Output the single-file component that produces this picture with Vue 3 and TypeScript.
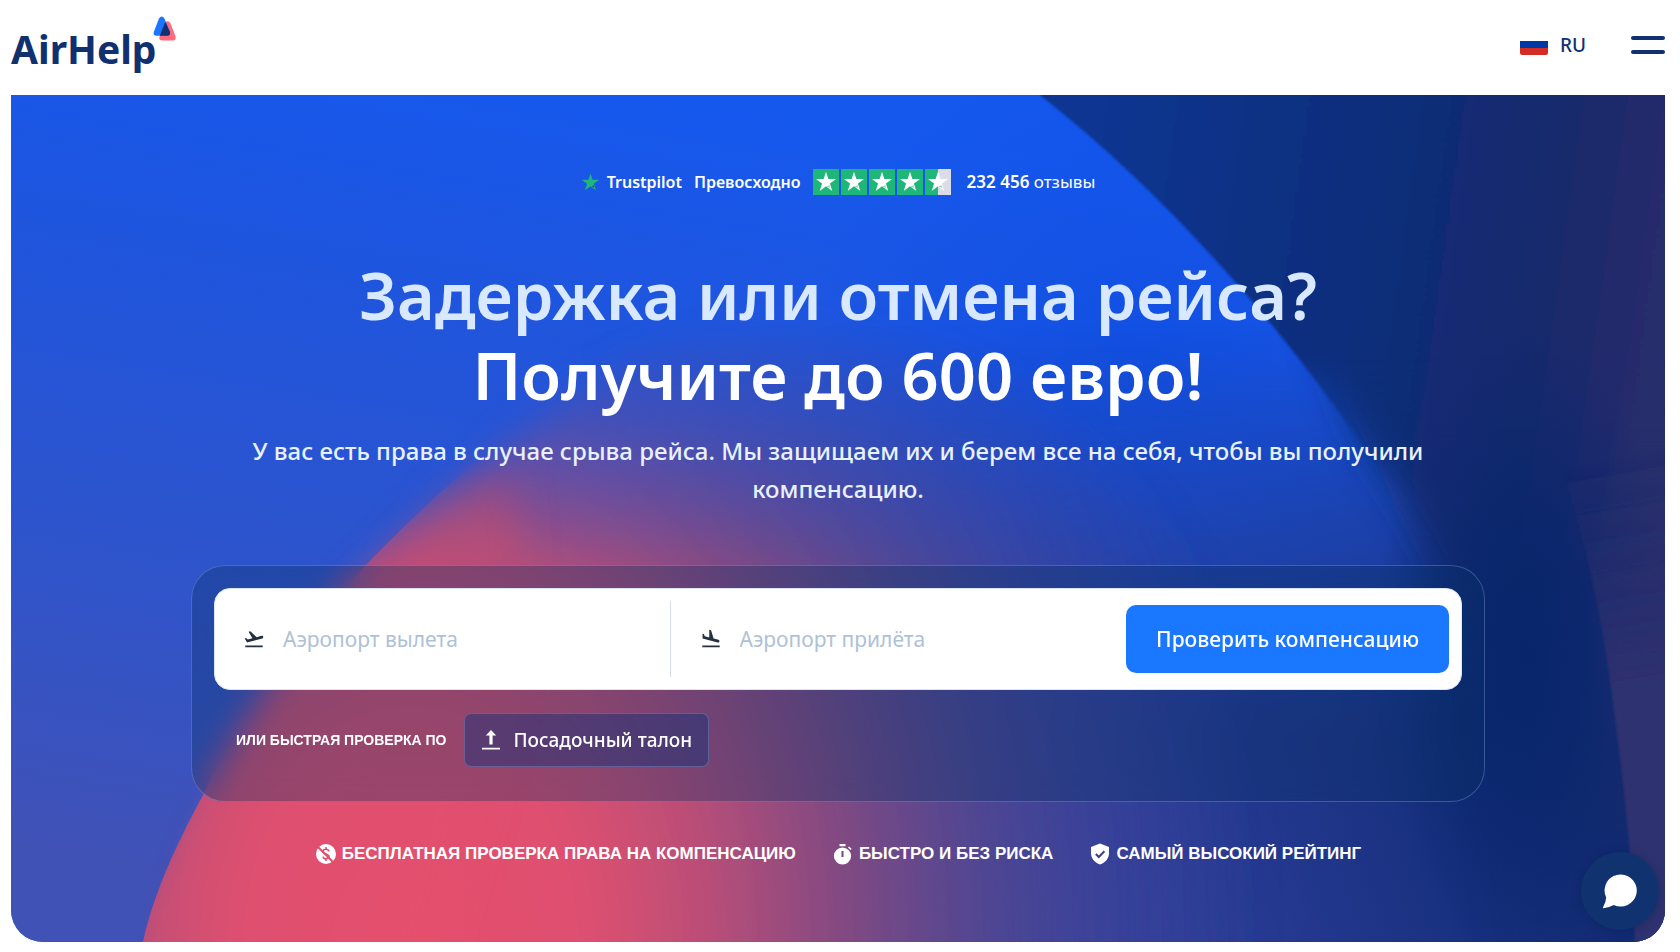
<script setup lang="ts">
import { ref } from 'vue'

const departure = ref('')
const arrival = ref('')

const starFills: ('full' | 'half')[] = ['full', 'full', 'full', 'full', 'half']
const starPoints = '12,2.5 14.2,9.2 21.3,9.2 15.6,13.4 17.8,20.2 12,16 6.2,20.2 8.4,13.4 2.7,9.2 9.8,9.2'
</script>

<template>
  <div class="page">
    <header class="header">
      <a class="logo" href="#" aria-label="AirHelp">
        <span class="logo-text">AirHelp</span>
        <svg class="logo-mark" viewBox="0 0 24 26" aria-hidden="true">
          <path d="M12.2 6.6Q14.8 3.6 17.2 6.8L22.6 20.6Q23.2 24.6 20 24.6H9.4Q5.6 24.4 6.4 21Z" fill="#ff6b7c" />
          <path d="M6 2.6Q8.8-1.4 11.4 2.6L17 16Q17.6 19.6 14.4 19.8H3.4Q0 19.6.8 16Z" fill="#1a75ff" />
          <path d="M12.6 6.2L17 16Q17.6 19.6 14.4 19.8H6.8L11.6 7.4Z" fill="#10306f" />
        </svg>
      </a>
      <nav class="header-actions">
        <button class="language" type="button">
          <svg class="flag" viewBox="0 0 28 20" aria-hidden="true">
            <clipPath id="flag-clip"><rect width="28" height="20" rx="2.5" /></clipPath>
            <g clip-path="url(#flag-clip)">
              <rect width="28" height="7" fill="#fff" />
              <rect y="6" width="28" height="7" fill="#0039a6" />
              <rect y="13" width="28" height="7" fill="#d52b25" />
            </g>
          </svg>
          <span>RU</span>
        </button>
        <button class="menu" type="button" aria-label="Меню"><i></i><i></i></button>
      </nav>
    </header>

    <main class="hero">
      <svg class="backdrop" viewBox="0 0 1654 847" preserveAspectRatio="none" aria-hidden="true">
        <defs>
          <linearGradient id="base" x1="700" y1="0" x2="560" y2="847" gradientUnits="userSpaceOnUse">
            <stop offset="0" stop-color="#1558ee" />
            <stop offset="0.3" stop-color="#2055dc" />
            <stop offset="0.65" stop-color="#2f54cb" />
            <stop offset="1" stop-color="#4152b6" />
          </linearGradient>
          <radialGradient id="bright" cx="1130" cy="270" r="330" gradientUnits="userSpaceOnUse">
            <stop offset="0" stop-color="#1150e4" />
            <stop offset="1" stop-color="#1150e4" stop-opacity="0" />
          </radialGradient>
          <linearGradient id="right-shade" x1="760" y1="800" x2="1520" y2="520" gradientUnits="userSpaceOnUse">
            <stop offset="0" stop-color="#40438f" stop-opacity="0" />
            <stop offset="0.3" stop-color="#36419a" stop-opacity="0.8" />
            <stop offset="0.65" stop-color="#20368a" />
            <stop offset="1" stop-color="#0f2a72" />
          </linearGradient>
          <linearGradient id="shade-fade" x1="0" y1="230" x2="0" y2="640" gradientUnits="userSpaceOnUse">
            <stop offset="0" stop-color="#000" />
            <stop offset="1" stop-color="#fff" />
          </linearGradient>
          <mask id="shade-mask" maskUnits="userSpaceOnUse" x="0" y="0" width="1654" height="847">
            <rect width="1654" height="847" fill="url(#shade-fade)" />
          </mask>

          <linearGradient id="navy" x1="1080" y1="100" x2="1654" y2="180" gradientUnits="userSpaceOnUse">
            <stop offset="0" stop-color="#0b3691" />
            <stop offset="0.45" stop-color="#0c2e7c" />
            <stop offset="0.8" stop-color="#182b6c" />
            <stop offset="1" stop-color="#282d6c" />
          </linearGradient>
          <linearGradient id="navy-sharp-fade" x1="0" y1="260" x2="0" y2="400" gradientUnits="userSpaceOnUse">
            <stop offset="0" stop-color="#fff" />
            <stop offset="1" stop-color="#000" />
          </linearGradient>
          <mask id="navy-sharp-mask" maskUnits="userSpaceOnUse" x="0" y="0" width="1654" height="847">
            <rect width="1654" height="847" fill="url(#navy-sharp-fade)" />
          </mask>
          <linearGradient id="navy-soft-fade" x1="0" y1="200" x2="0" y2="847" gradientUnits="userSpaceOnUse">
            <stop offset="0" stop-color="#fff" />
            <stop offset="0.45" stop-color="#fff" />
            <stop offset="0.85" stop-color="#333" />
            <stop offset="1" stop-color="#111" />
          </linearGradient>
          <mask id="navy-soft-mask" maskUnits="userSpaceOnUse" x="0" y="0" width="1654" height="847">
            <rect width="1654" height="847" fill="url(#navy-soft-fade)" />
          </mask>
          <radialGradient id="deep" cx="0" cy="0" r="1" gradientUnits="userSpaceOnUse" gradientTransform="translate(1515 560) scale(150 330)">
            <stop offset="0" stop-color="#08256b" />
            <stop offset="0.4" stop-color="#08266c" stop-opacity="0.8" />
            <stop offset="1" stop-color="#0a2870" stop-opacity="0" />
          </radialGradient>
          <linearGradient id="rim" x1="1500" y1="380" x2="1540" y2="600" gradientUnits="userSpaceOnUse">
            <stop offset="0" stop-color="#2b2d6c" stop-opacity="0" />
            <stop offset="1" stop-color="#2e306f" />
          </linearGradient>

          <radialGradient id="coral" cx="0" cy="0" r="1" gradientUnits="userSpaceOnUse" gradientTransform="translate(400 847) scale(850 1100)">
            <stop offset="0" stop-color="#e5506d" />
            <stop offset="0.2" stop-color="#df506f" />
            <stop offset="0.36" stop-color="#b74e78" />
            <stop offset="0.52" stop-color="#83497f" stop-opacity="0.94" />
            <stop offset="0.68" stop-color="#54468e" stop-opacity="0.8" />
            <stop offset="0.84" stop-color="#3e4296" stop-opacity="0.45" />
            <stop offset="1" stop-color="#34419a" stop-opacity="0" />
          </radialGradient>
          <linearGradient id="coral-soft-fade" x1="0" y1="190" x2="0" y2="847" gradientUnits="userSpaceOnUse">
            <stop offset="0" stop-color="#000" />
            <stop offset="0.2" stop-color="#5c5c5c" />
            <stop offset="0.32" stop-color="#aaa" />
            <stop offset="0.44" stop-color="#fff" />
            <stop offset="1" stop-color="#fff" />
          </linearGradient>
          <mask id="coral-soft-mask" maskUnits="userSpaceOnUse" x="0" y="0" width="1654" height="847">
            <rect width="1654" height="847" fill="url(#coral-soft-fade)" />
          </mask>
          <linearGradient id="coral-left-fade" x1="300" y1="410" x2="330" y2="500" gradientUnits="userSpaceOnUse">
            <stop offset="0" stop-color="#000" />
            <stop offset="1" stop-color="#fff" />
          </linearGradient>
          <mask id="coral-sharp-mask" maskUnits="userSpaceOnUse" x="0" y="0" width="1654" height="847">
            <rect width="1654" height="847" fill="url(#coral-left-fade)" />
          </mask>
          <filter id="soft" filterUnits="userSpaceOnUse" x="-100" y="-100" width="1900" height="1100"><feGaussianBlur stdDeviation="18" /></filter>
          <filter id="edge" filterUnits="userSpaceOnUse" x="-100" y="-100" width="1900" height="1100"><feGaussianBlur stdDeviation="1" /></filter>
          <clipPath id="inside-arc">
            <path d="M132 847C142 800 165 750 192 700C235 610 300 530 355 470C400 424 440 384 500 340L440 150H1654V847Z" />
          </clipPath>
        </defs>
        <rect width="1654" height="847" fill="url(#base)" />
        <rect width="1654" height="847" fill="url(#bright)" />
        <g mask="url(#shade-mask)"><rect width="1654" height="847" fill="url(#right-shade)" /></g>

        <g mask="url(#coral-soft-mask)">
          <path
            d="M160 940C170 800 195 750 222 700C265 610 310 530 370 470C430 410 490 350 560 300C700 200 900 200 1050 330C1250 480 1320 700 1340 940Z"
            fill="url(#coral)" filter="url(#soft)" />
        </g>
        <g mask="url(#coral-sharp-mask)">
          <g clip-path="url(#inside-arc)">
            <path
              d="M60 940L192 640L355 400L480 330C540 440 500 640 400 940Z"
              fill="url(#coral)" filter="url(#soft)" />
          </g>
        </g>

        <g mask="url(#navy-soft-mask)">
          <path d="M1290 140C1310 240 1330 310 1362 360C1425 450 1460 540 1480 640L1500 940H1760V140Z" fill="url(#navy)" filter="url(#soft)" />
        </g>
        <g mask="url(#navy-sharp-mask)">
          <path d="M1029 0C1150 95 1255 215 1330 320C1390 400 1440 470 1480 560H1720V-20H1029Z" fill="url(#navy)" filter="url(#edge)" />
        </g>
        <ellipse cx="1515" cy="560" rx="150" ry="330" fill="url(#deep)" />
        <path d="M1530 320C1580 440 1597 560 1606 640Q1620 740 1624 847H1700V320Z" fill="url(#rim)" filter="url(#edge)" />
      </svg>

      <section class="content">
        <a class="trust" href="#">
          <span class="trust-brand">
            <svg class="trust-star" viewBox="2 2 20 19" aria-hidden="true">
              <polygon :points="starPoints" fill="#1fb67a" />
              <path d="M15.2 14.6l1 2.8-2.6-.8z" fill="#125b46" />
            </svg>
            <b>Trustpilot</b>
          </span>
          <b>Превосходно</b>
          <span class="stars">
            <svg v-for="(fill, i) in starFills" :key="i" viewBox="0 0 24 24" aria-hidden="true">
              <rect width="24" height="24" fill="#1fb67a" />
              <rect v-if="fill === 'half'" x="12" width="12" height="24" fill="#dcdce6" />
              <polygon :points="starPoints" fill="#fff" />
              <path d="M12.4 16.2l2.8-1.2.8 2.5z" fill="#8fd9bb" />
            </svg>
          </span>
          <span class="reviews"><b>232 456</b> отзывы</span>
        </a>

        <h1 class="title"><span>Задержка или отмена рейса?</span> <strong>Получите до 600 евро!</strong></h1>
        <p class="subtitle">
          У вас есть права в случае срыва рейса. Мы защищаем их и берем все на себя, чтобы вы получили компенсацию.
        </p>

        <form class="panel" @submit.prevent>
          <div class="search">
            <label class="field">
              <svg viewBox="0 0 24 24" aria-hidden="true">
                <path d="M2.5 19h19v2h-19zM22.07 9.64c-.21-.8-1.04-1.28-1.84-1.06L14.92 10l-6.9-6.43-1.93.51 4.14 7.17-4.97 1.33-1.97-1.54-1.45.39 2.59 4.49L21 11.49c.81-.23 1.28-1.05 1.07-1.85z" />
              </svg>
              <input v-model="departure" type="text" placeholder="Аэропорт вылета" aria-label="Аэропорт вылета" />
            </label>
            <label class="field">
              <svg viewBox="0 0 24 24" aria-hidden="true">
                <path d="M2.5 19h19v2h-19zM19.34 15.85c.8.21 1.62-.26 1.84-1.06.21-.8-.26-1.62-1.06-1.84l-5.31-1.42-2.76-9.02L10.12 2v8.28L5.15 8.95l-.93-2.32-1.45-.39v5.17l16.57 4.44z" />
              </svg>
              <input v-model="arrival" type="text" placeholder="Аэропорт прилёта" aria-label="Аэропорт прилёта" />
            </label>
            <button class="submit" type="submit">Проверить компенсацию</button>
          </div>
          <div class="quick">
            <span class="quick-label">ИЛИ БЫСТРАЯ ПРОВЕРКА ПО</span>
            <button class="boarding" type="button">
              <svg viewBox="0 0 20 20" aria-hidden="true">
                <path d="M1 17.8h18v1.8H1zM10 0l5.2 5.6h-3.6v8.8H8.400V5.600H4.800z" fill="#fff" />
              </svg>
              Посадочный талон
            </button>
          </div>
        </form>

        <ul class="benefits">
          <li>
            <svg viewBox="0 0 22 22" aria-hidden="true">
              <circle cx="11" cy="11" r="10" fill="#fff" />
              <g fill="none" stroke="#df506f">
                <path d="M14 8.4C13.6 6.8 12.6 6.2 11 6.2C9.2 6.2 8 7 8 8.4C8 10 9.5 10.5 11 11C12.5 11.5 14 12 14 13.6C14 15 12.8 15.8 11 15.8C9.4 15.8 8.3 15.2 8 13.6M11 4v2.2M11 15.8V18" stroke-width="1.6" />
                <path d="M2.5 3.5L18.5 19.5" stroke-width="2" />
              </g>
            </svg>
            БЕСПЛАТНАЯ ПРОВЕРКА ПРАВА НА КОМПЕНСАЦИЮ
          </li>
          <li>
            <svg viewBox="0 0 22 22" aria-hidden="true">
              <circle cx="10.5" cy="13" r="8.6" fill="#fff" />
              <path d="M7.5 1h6v2.2h-6zM17 3.4l2.6 2.3-1 1.2L16 4.6z" fill="#fff" />
              <path d="M10.5 8v6" stroke="#6f4985" stroke-width="2" />
            </svg>
            БЫСТРО И БЕЗ РИСКА
          </li>
          <li>
            <svg viewBox="0 0 22 22" aria-hidden="true">
              <path d="M11 .5l9 3.5v6.2c0 5-3.8 9.6-9 11.3-5.2-1.7-9-6.3-9-11.3V4z" fill="#fff" />
              <path d="M6.8 11l3 3 5.6-5.7" fill="none" stroke="#3a4090" stroke-width="2" />
            </svg>
            САМЫЙ ВЫСОКИЙ РЕЙТИНГ
          </li>
        </ul>
      </section>
    </main>

    <button class="chat" type="button" aria-label="Открыть чат">
      <svg viewBox="0 0 36 36" aria-hidden="true">
        <path d="M19 1.5a16 16 0 1 1-7.2 30.4Q7 34.5 1.4 35.2Q.6 35 1 34.2Q4 29.5 4.2 24.6A16 16 0 0 1 19 1.5z" fill="#fff" />
      </svg>
    </button>
  </div>
</template>

<style>
body {
  background: #fff;
}
</style>

<style scoped>
.page {
  box-sizing: border-box;
  min-height: 100vh;
  padding: 0 15px 10px 11px;
  display: flex;
  flex-direction: column;
  overflow: hidden;
  font-family: 'Noto Sans', 'Open Sans', sans-serif;
  color: #fff;
}

button {
  font: inherit;
  border: 0;
  padding: 0;
  cursor: pointer;
}

.header {
  box-sizing: border-box;
  height: 95px;
  display: flex;
  align-items: center;
  justify-content: space-between;
  padding-bottom: 5px;
}

.logo {
  display: flex;
  color: #10306f;
  text-decoration: none;
}

.logo-text {
  font-size: 39px;
  font-weight: 700;
  line-height: 56px;
  padding-top: 7px;
}

.logo-mark {
  width: 24px;
  height: 26px;
  margin: 2px 0 0 -3px;
}

.header-actions {
  display: flex;
  align-items: center;
  gap: 45px;
}

.language {
  display: flex;
  align-items: center;
  gap: 12px;
  background: none;
  color: #10306f;
  font-size: 19px;
  font-weight: 500;
}

.flag {
  width: 28px;
  height: 20px;
}

.menu {
  width: 34px;
  display: grid;
  gap: 10px;
  background: none;
}

.menu i {
  height: 4px;
  border-radius: 2px;
  background: #10306f;
}

.hero {
  position: relative;
  flex: 1;
  overflow: hidden;
  border-radius: 0 0 32px 32px;
  background: #1f55d8;
}

.backdrop {
  position: absolute;
  inset: 0;
  width: 100%;
  height: 100%;
}

.content {
  position: relative;
  display: flex;
  flex-direction: column;
  align-items: center;
  padding: 73px 180px 0;
}

.trust {
  display: flex;
  align-items: center;
  gap: 12px;
  color: #fff;
  text-decoration: none;
  font-size: 16px;
  line-height: 28px;
}

.trust b {
  font-weight: 600;
}

.trust-brand {
  display: flex;
  align-items: center;
  gap: 7px;
}

.trust-star {
  width: 19px;
  height: 18px;
}

.stars {
  display: flex;
  gap: 2px;
}

.stars svg {
  width: 26px;
  height: 26px;
}

.reviews {
  margin-left: 4px;
  font-size: 17px;
}

.title {
  margin: 59px 0 0;
  font-size: 65px;
  line-height: 80px;
  font-weight: 600;
  text-align: center;
}

.title span,
.title strong {
  display: block;
  font-weight: 600;
}

.title span {
  color: #d8e9ff;
}

.subtitle {
  margin: 17px 0 0;
  max-width: 1200px;
  font-size: 24px;
  font-weight: 500;
  line-height: 38px;
  text-align: center;
  color: #e8f1ff;
}

.panel {
  box-sizing: border-box;
  width: 100%;
  margin-top: 57px;
  padding: 22px 22px 34px;
  border: 1px solid rgba(160, 190, 240, 0.3);
  border-radius: 34px;
  background: rgba(8, 50, 100, 0.33);
  backdrop-filter: blur(16px);
}

.search {
  display: flex;
  align-items: center;
  padding: 12px;
  border: 1px solid #dbe5f5;
  border-radius: 16px;
  background: #fff;
}

.field {
  flex: 1;
  display: flex;
  align-items: center;
  gap: 18px;
  height: 76px;
  padding-left: 16px;
}

.field + .field {
  padding-left: 29px;
  border-left: 1px solid #d5dfea;
}

.field svg {
  flex: none;
  width: 22px;
  height: 22px;
  fill: #24303f;
}

.field input {
  flex: 1;
  min-width: 0;
  border: 0;
  padding: 0;
  outline: 0;
  background: none;
  font: 400 21px/32px 'Noto Sans', sans-serif;
  color: #24303f;
}

.field input::placeholder {
  color: #afc1d6;
  opacity: 1;
}

.submit {
  height: 68px;
  padding: 0 30px;
  border-radius: 10px;
  background: #1a77ff;
  color: #fff;
  font-size: 21px;
  font-weight: 500;
}

.quick {
  display: flex;
  align-items: center;
  gap: 18px;
  margin: 23px 0 0 22px;
}

.quick-label {
  font: 700 14px/20px 'Liberation Sans', Arial, sans-serif;
}

.boarding {
  box-sizing: border-box;
  height: 54px;
  display: flex;
  align-items: center;
  gap: 12px;
  padding: 0 16px;
  border: 1px solid rgba(130, 150, 210, 0.4);
  border-radius: 7px;
  background: rgba(16, 48, 120, 0.45);
  color: #fff;
  font-size: 19px;
  font-weight: 500;
}

.boarding svg {
  width: 20px;
  height: 20px;
}

.benefits {
  display: flex;
  justify-content: center;
  gap: 36px;
  margin: 40px 0 0;
  padding: 0;
  list-style: none;
  font: 700 17px/24px 'Liberation Sans', Arial, sans-serif;
}

.benefits li {
  display: flex;
  align-items: center;
  gap: 5px;
}

.benefits svg {
  width: 22px;
  height: 22px;
}

.chat {
  position: fixed;
  right: 21px;
  bottom: 22px;
  width: 78px;
  height: 78px;
  display: grid;
  place-items: center;
  border-radius: 50%;
  background: #10336f;
  box-shadow: 0 1px 8px rgba(8, 25, 70, 0.35);
}

.chat svg {
  width: 36px;
  height: 36px;
}
</style>
